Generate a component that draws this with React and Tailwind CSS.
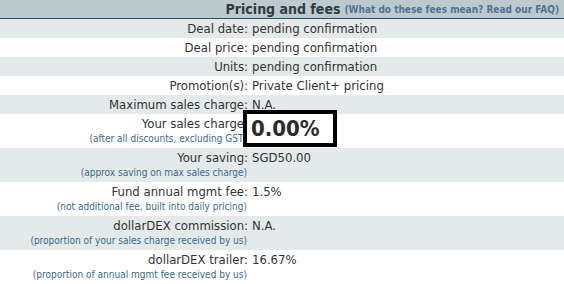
import React from "react";

const rows = [
  { label: "Deal date:", value: "pending confirmation" },
  { label: "Deal price:", value: "pending confirmation" },
  { label: "Units:", value: "pending confirmation" },
  { label: "Promotion(s):", value: "Private Client+ pricing" },
  { label: "Maximum sales charge:", value: "N.A." },
  { label: "Your sales charge:", sub: "(after all discounts, excluding GST)", box: "0.00%" },
  { label: "Your saving:", sub: "(approx saving on max sales charge)", value: "SGD50.00" },
  { label: "Fund annual mgmt fee:", sub: "(not additional fee, built into daily pricing)", value: "1.5%" },
  { label: "dollarDEX commission:", sub: "(proportion of your sales charge received by us)", value: "N.A." },
  { label: "dollarDEX trailer:", sub: "(proportion of annual mgmt fee received by us)", value: "16.67%" },
];

export default function App() {
  return (
    <div
      className="w-[564px] h-[284px] overflow-hidden bg-white text-[13px] text-[#333333]"
      style={{ fontFamily: '"DejaVu Sans Condensed", "DejaVu Sans", Tahoma, sans-serif' }}
    >
      <div className="h-[19px] bg-[#bccacd] border-b border-[#2a4a7a] flex items-center justify-end pr-[5px] whitespace-nowrap">
        <span className="font-bold text-[14px] text-[#2f3a44] leading-[17px]">Pricing and fees</span>
        <span className="font-bold text-[10px] text-[#4e7394] leading-[17px] ml-[4px]">
          (What do these fees mean? Read our FAQ)
        </span>
      </div>
      {rows.map((r, i) => (
        <div
          key={i}
          className={`grid grid-cols-[248px_1fr] ${i % 2 === 0 ? "bg-[#e4e9e9]" : "bg-white"} ${r.sub ? "h-[34px]" : "h-[19px]"}`}
        >
          <div className="flex flex-col items-end whitespace-nowrap">
            <div className="leading-[19px]">{r.label}</div>
            {r.sub && (
              <div className="text-[10px] leading-[12px] text-[#3a6a90] pr-[1px]">{r.sub}</div>
            )}
          </div>
          <div className="relative whitespace-nowrap">
            {r.value && <div className="leading-[19px] pl-[4px]">{r.value}</div>}
            {r.box && (
              <div className="absolute left-[-5px] top-[-4px] w-[94px] h-[37px] border-4 border-black bg-white flex items-center pl-[4px]">
                <span className="font-bold text-[22px] leading-none text-[#2b2b2b]">{r.box}</span>
              </div>
            )}
          </div>
        </div>
      ))}
    </div>
  );
}
